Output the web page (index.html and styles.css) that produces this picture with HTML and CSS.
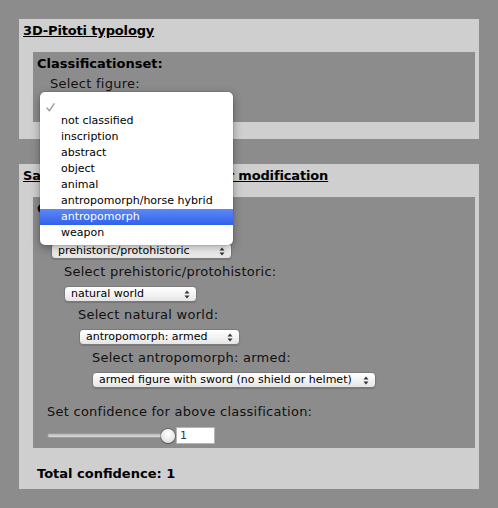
FILE: index.html
```html
<!DOCTYPE html>
<html>
<head>
<meta charset="utf-8">
<link rel="stylesheet" href="styles.css">
</head>
<body>
<div class="panel">
  <div class="title">3D-Pitoti typology</div>
  <div class="inner inner-first">
    <div class="heading">Classificationset:</div>
    <div class="level">
      <div class="label first">Select figure:</div>
      <div class="select sel-fig"><span class="val"></span><svg class="arrows" width="6" height="9" viewBox="0 0 6 9"><path d="M0.5 3.5 L3 0.5 L5.5 3.5 Z M0.5 5.5 L3 8.5 L5.5 5.5 Z" fill="#333"/></svg></div>
    </div>
  </div>
  <div class="popup">
    <div class="opt check"><svg width="9" height="9" viewBox="0 0 9 9"><path d="M1 5 L3.3 7.8 L8 0.8" fill="none" stroke="#9d9d9d" stroke-width="1.4" stroke-linecap="round" stroke-linejoin="round"/></svg></div>
    <div class="opt">not classified</div>
    <div class="opt">inscription</div>
    <div class="opt">abstract</div>
    <div class="opt">object</div>
    <div class="opt">animal</div>
    <div class="opt">antropomorph/horse hybrid</div>
    <div class="opt sel">antropomorph</div>
    <div class="opt">weapon</div>
  </div>
</div>

<div class="panel second">
  <div class="title">Sansoni typology - Alexander modification</div>
  <div class="inner">
    <div class="heading">Classificationset:</div>
    <div class="level">
      <div class="label first">Select figure:</div>
      <div class="select sel-a"><span class="val">prehistoric/protohistoric</span><svg class="arrows" width="6" height="9" viewBox="0 0 6 9"><path d="M0.5 3.5 L3 0.5 L5.5 3.5 Z M0.5 5.5 L3 8.5 L5.5 5.5 Z" fill="#333"/></svg></div>
      <div class="level">
        <div class="label">Select prehistoric/protohistoric:</div>
        <div class="select sel-b"><span class="val">natural world</span><svg class="arrows" width="6" height="9" viewBox="0 0 6 9"><path d="M0.5 3.5 L3 0.5 L5.5 3.5 Z M0.5 5.5 L3 8.5 L5.5 5.5 Z" fill="#333"/></svg></div>
        <div class="level">
          <div class="label">Select natural world:</div>
          <div class="select sel-c"><span class="val">antropomorph: armed</span><svg class="arrows" width="6" height="9" viewBox="0 0 6 9"><path d="M0.5 3.5 L3 0.5 L5.5 3.5 Z M0.5 5.5 L3 8.5 L5.5 5.5 Z" fill="#333"/></svg></div>
          <div class="level">
            <div class="label">Select antropomorph: armed:</div>
            <div class="select sel-d"><span class="val">armed figure with sword (no shield or helmet)</span><svg class="arrows" width="6" height="9" viewBox="0 0 6 9"><path d="M0.5 3.5 L3 0.5 L5.5 3.5 Z M0.5 5.5 L3 8.5 L5.5 5.5 Z" fill="#333"/></svg></div>
          </div>
        </div>
      </div>
    </div>
    <div class="confidence">
      <div class="label">Set confidence for above classification:</div>
      <div class="slider-row">
        <div class="track"></div>
        <div class="thumb"></div>
        <div class="num">1</div>
      </div>
    </div>
  </div>
  <div class="total">Total confidence: 1</div>
</div>
</body>
</html>
```

FILE: styles.css
```css
html, body {
  margin: 0;
  padding: 0;
}
body {
  background: #8c8c8c;
  padding: 19px;
  font-family: "DejaVu Sans", Verdana, sans-serif;
  font-size: 13px;
  line-height: 16px;
  color: #000;
}
.panel {
  position: relative;
  width: 460px;
  box-sizing: border-box;
  background: #cfcfcf;
  padding: 4px 4px 4px 4px;
}
.panel.second {
  margin-top: 25px;
}
.title {
  font-weight: bold;
  text-decoration: underline;
  letter-spacing: -0.15px;
  margin-bottom: 13px;
}
.inner {
  background: #8c8c8c;
  margin-left: 10px;
  padding: 4px;
  margin-bottom: 13px;
}
.inner-first {
  padding-bottom: 8px;
}
.heading {
  font-weight: bold;
}
.level {
  margin-left: 14px;
}
.label {
  margin-top: 5px;
  margin-left: -1px;
  color: #111;
  letter-spacing: 0.25px;
}
.label.first {
  margin-top: 4px;
}
.select {
  display: flex;
  align-items: center;
  box-sizing: border-box;
  height: 16px;
  margin-top: 6px;
  padding: 0 6px 0 6px;
  border: 1px solid #7a7a7a;
  border-radius: 4px;
  background: linear-gradient(#ffffff, #f1f1f1 60%, #e4e4e4);
  font-size: 11px;
  line-height: 14px;
  color: #000;
  box-shadow: 0 1px 1px rgba(0,0,0,0.15);
}
.select .val {
  flex: 1;
  white-space: nowrap;
}
.select .arrows {
  flex: none;
}
.sel-fig { width: 182px; }
.sel-a { width: 181px; }
.sel-b { width: 133px; margin-left: -1px; }
.sel-c { width: 161px; }
.sel-d { width: 284px; margin-left: -1px; }

.confidence {
  margin-left: 10px;
  margin-top: 16px;
}
.confidence .label {
  margin-left: 0;
}
.slider-row {
  display: flex;
  align-items: center;
  margin-top: 7px;
  height: 17px;
}
.track {
  width: 118px;
  height: 3px;
  border: 1px solid #9a9a9a;
  border-radius: 3px;
  background: linear-gradient(#b8b8b8, #dcdcdc);
}
.thumb {
  width: 14px;
  height: 14px;
  border-radius: 50%;
  margin-left: -6px;
  background: radial-gradient(circle at 50% 35%, #ffffff, #e8e8e8 60%, #cfcfcf);
  box-shadow: 0 0 0 1px rgba(0,0,0,0.25), 0 1px 1px rgba(0,0,0,0.2);
}
.num {
  box-sizing: border-box;
  width: 39px;
  height: 17px;
  margin-left: 1px;
  background: #fff;
  border: 1px solid #b5b5b5;
  font-size: 11px;
  line-height: 16px;
  padding-left: 3px;
  color: #333;
}
.total {
  font-weight: bold;
  margin-left: 14px;
  padding-top: 5px;
  padding-bottom: 3px;
}

.popup {
  position: absolute;
  left: 21px;
  top: 73px;
  width: 193px;
  box-sizing: border-box;
  padding: 5px 0 4px 0;
  background: #fff;
  border-radius: 5px;
  box-shadow: 0 3px 10px rgba(0,0,0,0.35), 0 0 0 1px rgba(0,0,0,0.08);
  z-index: 10;
  font-size: 11px;
}
.opt {
  height: 16px;
  line-height: 16px;
  padding-left: 21px;
  color: #000;
  white-space: nowrap;
}
.opt.check {
  padding-left: 6px;
  display: flex;
  align-items: flex-end;
  box-sizing: border-box;
  padding-bottom: 1px;
}
.opt.sel {
  background: linear-gradient(#5f87f5, #2f61ec);
  color: #fff;
}
```
